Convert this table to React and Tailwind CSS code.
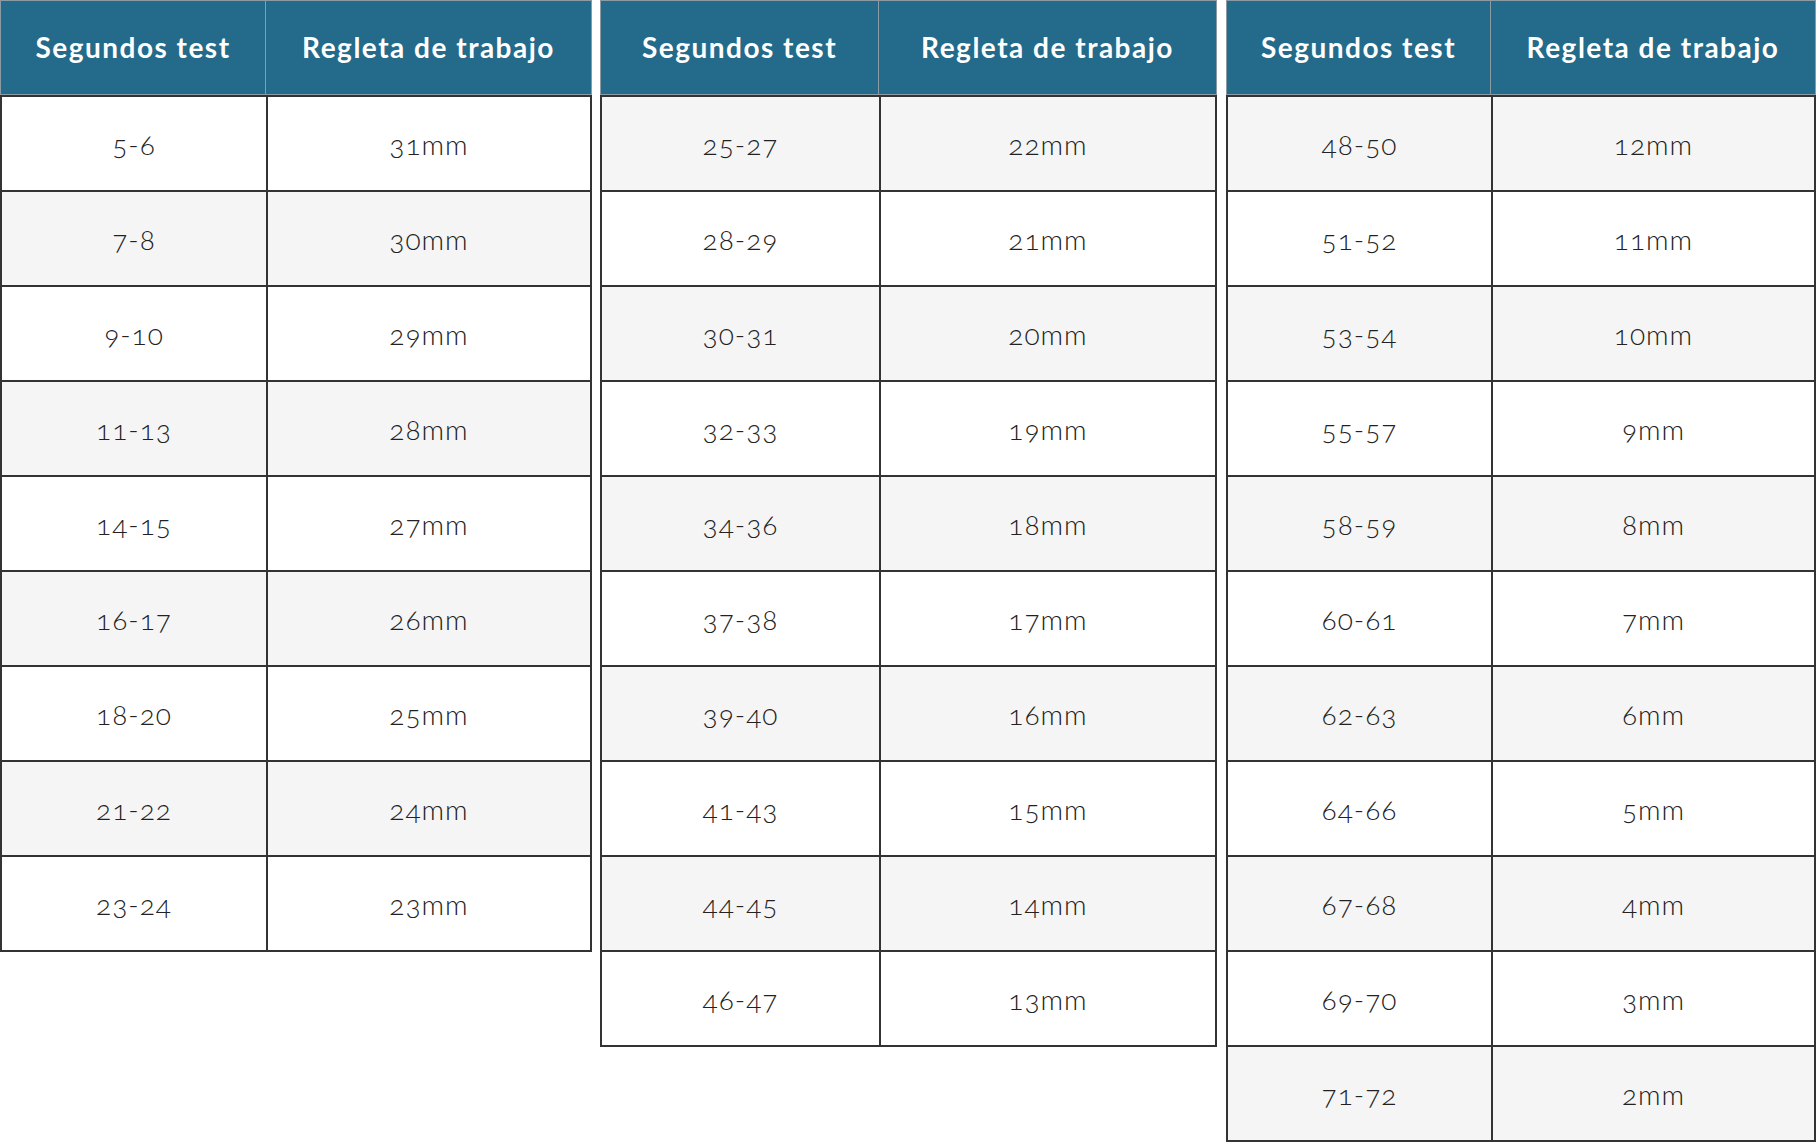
import React from "react";

const tables = [
  {
    width: "w-[592px]",
    margin: "",
    col: "w-[266px]",
    hcol: "w-[265px]",
    firstGray: false,
    rows: [
      ["5-6", "31mm"],
      ["7-8", "30mm"],
      ["9-10", "29mm"],
      ["11-13", "28mm"],
      ["14-15", "27mm"],
      ["16-17", "26mm"],
      ["18-20", "25mm"],
      ["21-22", "24mm"],
      ["23-24", "23mm"],
    ],
  },
  {
    width: "w-[617px]",
    margin: "ml-[8px]",
    col: "w-[279px]",
    hcol: "w-[278px]",
    firstGray: true,
    rows: [
      ["25-27", "22mm"],
      ["28-29", "21mm"],
      ["30-31", "20mm"],
      ["32-33", "19mm"],
      ["34-36", "18mm"],
      ["37-38", "17mm"],
      ["39-40", "16mm"],
      ["41-43", "15mm"],
      ["44-45", "14mm"],
      ["46-47", "13mm"],
    ],
  },
  {
    width: "w-[590px]",
    margin: "ml-[9px]",
    col: "w-[265px]",
    hcol: "w-[264px]",
    firstGray: true,
    rows: [
      ["48-50", "12mm"],
      ["51-52", "11mm"],
      ["53-54", "10mm"],
      ["55-57", "9mm"],
      ["58-59", "8mm"],
      ["60-61", "7mm"],
      ["62-63", "6mm"],
      ["64-66", "5mm"],
      ["67-68", "4mm"],
      ["69-70", "3mm"],
      ["71-72", "2mm"],
    ],
  },
];

function Table({ t }) {
  return (
    <div className={`${t.width} ${t.margin} shrink-0`}>
      <div className="flex h-[95px] bg-[#246a8a] border border-[#8c9aa3] text-white font-bold text-[28px] tracking-[1.5px]">
        <div className={`${t.hcol} shrink-0 border-r border-[#8c9aa3] flex items-center justify-center pb-[2px]`}>
          Segundos test
        </div>
        <div className="flex-1 flex items-center justify-center pb-[2px]">Regleta de trabajo</div>
      </div>
      <div className="border-l-2 border-r-2 border-b-2 border-[#333333]">
        {t.rows.map((r, i) => {
          const gray = t.firstGray ? i % 2 === 0 : i % 2 === 1;
          return (
            <div
              key={i}
              className={`flex h-[95px] border-t-2 border-[#333333] ${gray ? "bg-[#f5f5f5]" : "bg-white"} text-[#222222] font-light text-[28px] tracking-[1px] oldstyle-nums`}
            >
              <div className={`${t.col} shrink-0 border-r-2 border-[#333333] flex items-center justify-center`}>
                {r[0]}
              </div>
              <div className="flex-1 flex items-center justify-center">{r[1]}</div>
            </div>
          );
        })}
      </div>
    </div>
  );
}

export default function App() {
  return (
    <div className="w-[1820px] h-[1146px] bg-white flex items-start font-['Lato','Noto_Sans',sans-serif]">
      {tables.map((t, i) => (
        <Table key={i} t={t} />
      ))}
    </div>
  );
}
